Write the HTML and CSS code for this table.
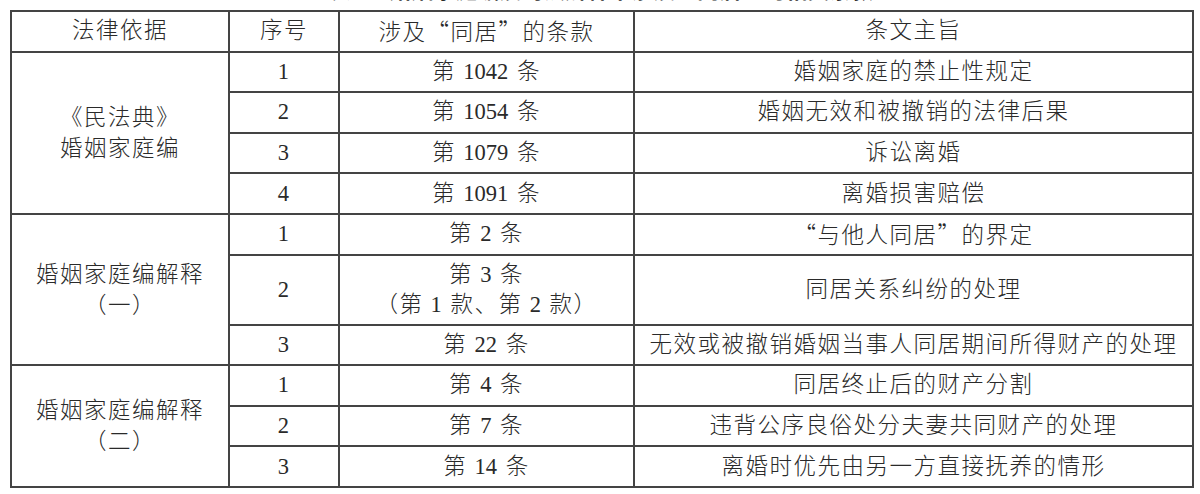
FILE: index.html
```html
<!DOCTYPE html>
<html lang="zh-CN">
<head>
<meta charset="utf-8">
<title>同居条款</title>
<link rel="stylesheet" href="styles.css">
</head>
<body>
<div class="page">
  <div class="caption"><span class="caption-text">表 1　婚姻家庭编及司法解释中涉及<span class="q">“</span>同居<span class="q">”</span>的相关条款</span></div>
  <table class="law-table">
    <colgroup>
      <col class="c-basis">
      <col class="c-no">
      <col class="c-art">
      <col class="c-gist">
    </colgroup>
    <thead>
      <tr>
        <th>法律依据</th>
        <th>序号</th>
        <th>涉及<span class="q">“</span>同居<span class="q">”</span>的条款</th>
        <th>条文主旨</th>
      </tr>
    </thead>
    <tbody>
      <tr>
        <td rowspan="4" class="basis">《民法典》<br>婚姻家庭编</td>
        <td><span class="n">1</span></td>
        <td>第 <span class="n">1042</span> 条</td>
        <td>婚姻家庭的禁止性规定</td>
      </tr>
      <tr>
        <td><span class="n">2</span></td>
        <td>第 <span class="n">1054</span> 条</td>
        <td>婚姻无效和被撤销的法律后果</td>
      </tr>
      <tr>
        <td><span class="n">3</span></td>
        <td>第 <span class="n">1079</span> 条</td>
        <td>诉讼离婚</td>
      </tr>
      <tr>
        <td><span class="n">4</span></td>
        <td>第 <span class="n">1091</span> 条</td>
        <td>离婚损害赔偿</td>
      </tr>
      <tr>
        <td rowspan="3" class="basis">婚姻家庭编解释<br>（一）</td>
        <td><span class="n">1</span></td>
        <td>第 <span class="n">2</span> 条</td>
        <td><span class="q">“</span>与他人同居<span class="q">”</span>的界定</td>
      </tr>
      <tr class="tall">
        <td><span class="n">2</span></td>
        <td>第 <span class="n">3</span> 条<br>（第 <span class="n">1</span> 款、第 <span class="n">2</span> 款）</td>
        <td>同居关系纠纷的处理</td>
      </tr>
      <tr>
        <td><span class="n">3</span></td>
        <td>第 <span class="n">22</span> 条</td>
        <td>无效或被撤销婚姻当事人同居期间所得财产的处理</td>
      </tr>
      <tr>
        <td rowspan="3" class="basis">婚姻家庭编解释<br>（二）</td>
        <td><span class="n">1</span></td>
        <td>第 <span class="n">4</span> 条</td>
        <td>同居终止后的财产分割</td>
      </tr>
      <tr>
        <td><span class="n">2</span></td>
        <td>第 <span class="n">7</span> 条</td>
        <td>违背公序良俗处分夫妻共同财产的处理</td>
      </tr>
      <tr>
        <td><span class="n">3</span></td>
        <td>第 <span class="n">14</span> 条</td>
        <td>离婚时优先由另一方直接抚养的情形</td>
      </tr>
    </tbody>
  </table>
</div>
</body>
</html>
```

FILE: styles.css
```css
html, body {
  margin: 0;
  padding: 0;
  background: #ffffff;
}

body {
  font-family: "Liberation Serif", "Noto Sans CJK SC", serif;
  color: #2a2a2a;
}

.page {
  padding: 0 0 0 10px;
}

.caption {
  height: 10px;
  width: 1182px;
  overflow: hidden;
  display: flex;
  align-items: flex-end;
  justify-content: center;
}

.caption-text {
  font-size: 22px;
  line-height: 22px;
  font-weight: 700;
  margin-bottom: 8px;
  white-space: nowrap;
}

.q {
  font-family: "Noto Sans CJK SC", sans-serif;
  font-feature-settings: "fwid";
}

.n {
  letter-spacing: 0;
  margin-right: 1.5px;
}

.law-table {
  border-collapse: collapse;
  table-layout: fixed;
  width: 1182px;
  font-size: 22.5px;
  letter-spacing: 1.5px;
  font-weight: 300;
}

.c-basis { width: 218px; }
.c-no { width: 110px; }
.c-art { width: 295px; }
.c-gist { width: 559px; }

.law-table th,
.law-table td {
  border: 2px solid #444444;
  padding: 0;
  height: 38.6px;
  text-align: center;
  vertical-align: middle;
  font-weight: 300;
  line-height: 30px;
  white-space: nowrap;
}

.law-table .tall td {
  height: 68px;
}

.law-table td.basis {
  line-height: 31px;
}
```
